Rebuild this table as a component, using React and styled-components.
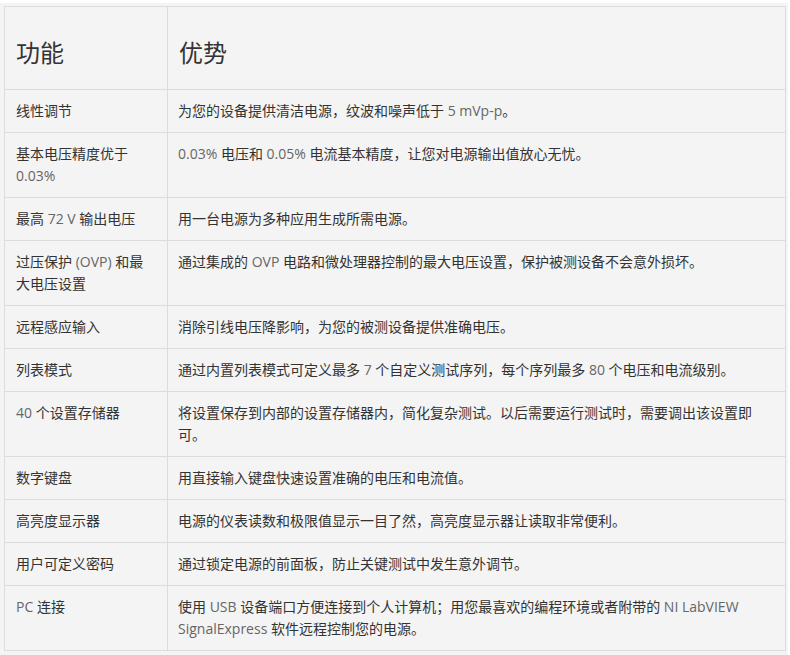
import React from 'react'
import styled, { createGlobalStyle } from 'styled-components'

const GlobalStyle = createGlobalStyle`
  body {
    margin: 0;
    background: #fff;
    font-family: "Open Sans", "Noto Sans CJK SC", sans-serif;
  }
`

const Wrap = styled.div`
  margin-top: 3px;
  width: 788px;
  height: 652px;
  box-sizing: border-box;
  padding: 3px 0 0 4px;
  background: #f4f4f4;
`

const Table = styled.table`
  width: 782px;
  border-collapse: collapse;
  table-layout: fixed;
  border: 1px solid #dcdcdc;
  color: #333;
`

const HeadCell = styled.th`
  box-sizing: border-box;
  text-align: left;
  font-weight: normal;
  font-size: 24px;
  line-height: 34px;
  padding: 29px 11px 19px;
  border: 1px solid #dcdcdc;
  color: #333;
  width: ${p => p.$w || 'auto'};
`

const Cell = styled.td`
  font-size: 14px;
  line-height: 22px;
  padding: 10px ${p => (p.$first ? '11px' : '10px')} 10px;
  vertical-align: top;
  border: 1px solid #dcdcdc;
`

const L = styled.span`
  color: #666;
  font-size: 14px;
`

const rows = [
  ['线性调节', <>为您的设备提供清洁电源，纹波和噪声低于 <L>5 mVp-p</L>。</>],
  [<>基本电压精度优于 <L>0.03%</L></>, <><L>0.03%</L> 电压和 <L>0.05%</L> 电流基本精度，让您对电源输出值放心无忧。</>],
  [<>最高 <L>72 V</L> 输出电压</>, '用一台电源为多种应用生成所需电源。'],
  [<>过压保护 <L>(OVP)</L> 和最大电压设置</>, <>通过集成的 <L>OVP</L> 电路和微处理器控制的最大电压设置，保护被测设备不会意外损坏。</>],
  ['远程感应输入', '消除引线电压降影响，为您的被测设备提供准确电压。'],
  ['列表模式', <>通过内置列表模式可定义最多 <L>7</L> 个自定义测试序列，每个序列最多 <L>80</L> 个电压和电流级别。</>],
  [<><L>40</L> 个设置存储器</>, '将设置保存到内部的设置存储器内，简化复杂测试。以后需要运行测试时，需要调出该设置即可。'],
  ['数字键盘', '用直接输入键盘快速设置准确的电压和电流值。'],
  ['高亮度显示器', '电源的仪表读数和极限值显示一目了然，高亮度显示器让读取非常便利。'],
  ['用户可定义密码', '通过锁定电源的前面板，防止关键测试中发生意外调节。'],
  [<><L>PC</L> 连接</>, <>使用 <L>USB</L> 设备端口方便连接到个人计算机；用您最喜欢的编程环境或者附带的 <L>NI LabVIEW SignalExpress</L> 软件远程控制您的电源。</>],
]

export default function App() {
  return (
    <>
      <GlobalStyle />
      <Wrap>
        <Table>
          <thead>
            <tr>
              <HeadCell $w="163px">功能</HeadCell>
              <HeadCell>优势</HeadCell>
            </tr>
          </thead>
          <tbody>
            {rows.map((r, i) => (
              <tr key={i}>
                <Cell $first>{r[0]}</Cell>
                <Cell>{r[1]}</Cell>
              </tr>
            ))}
          </tbody>
        </Table>
      </Wrap>
    </>
  )
}
